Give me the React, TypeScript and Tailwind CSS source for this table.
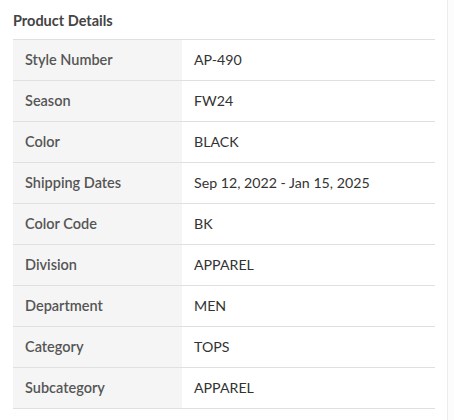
const rows: [string, string][] = [
  ['Style Number', 'AP-490'],
  ['Season', 'FW24'],
  ['Color', 'BLACK'],
  ['Shipping Dates', 'Sep 12, 2022 - Jan 15, 2025'],
  ['Color Code', 'BK'],
  ['Division', 'APPAREL'],
  ['Department', 'MEN'],
  ['Category', 'TOPS'],
  ['Subcategory', 'APPAREL'],
]

export default function App() {
  return (
    <div className="flex h-[420px] w-[454px] bg-white font-['Lato',sans-serif]">
      <div className="w-[447px] pl-[13px] pr-[12px]">
        {/* Heading */}
        <h2 className="flex h-[39px] items-center pt-[2px] text-[14.5px] font-bold text-[#444]">Product Details</h2>

        {/* Details table */}
        <div className="border-t border-[#e0e0e0]">
          {rows.map(([label, value]) => (
            <div key={label} className="flex h-[41px] border-b border-[#e0e0e0]">
              <div className="flex w-[169px] items-center bg-[#f5f5f5] px-[12px] pb-[1px] text-[14.5px] font-semibold text-[#555]">
                {label}
              </div>
              <div className="flex flex-1 items-center px-[12px] pb-[1px] text-[14.2px] text-[#333]">{value}</div>
            </div>
          ))}
        </div>
      </div>
      <div className="flex-1 border-l border-[#ececec] bg-[#fcfcfc]" />
    </div>
  )
}
